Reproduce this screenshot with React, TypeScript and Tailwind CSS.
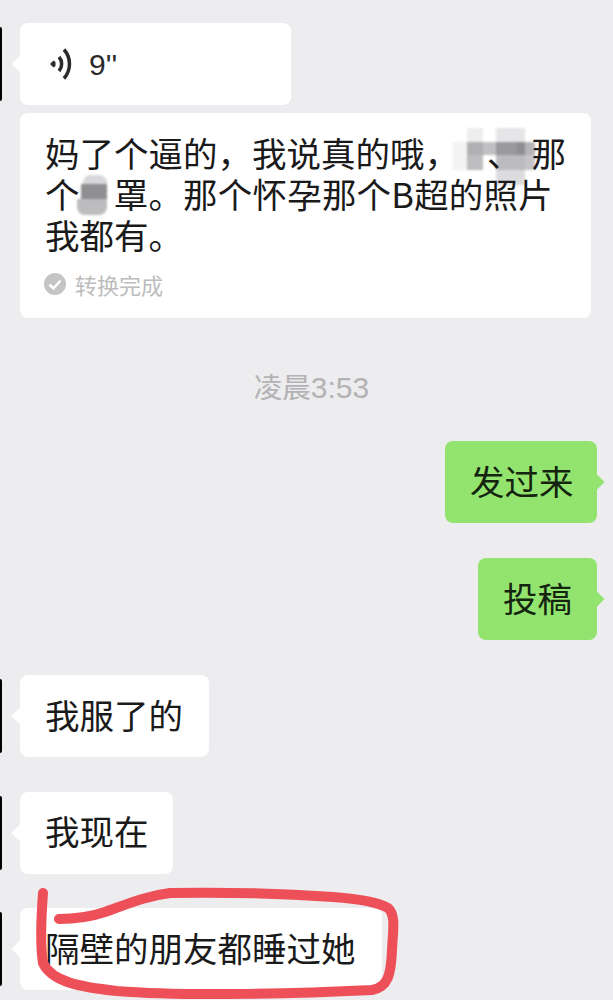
import type { ReactNode } from "react"

const mosaicCells = [
  "bg-white", "bg-[#eeeeef]", "bg-white", "bg-[#e5e5e7]", "bg-[#e5e5e7]", "bg-white",
  "bg-[#f3f3f4]", "bg-[#b0b0b2]", "bg-[#c0c0c2]", "bg-[#9a9a9c]", "bg-[#8f8f91]", "bg-[#b5b5b7]",
  "bg-[#f3f3f4]", "bg-[#bdbdbf]", "bg-white", "bg-[#bcbcbe]", "bg-[#bcbcbe]", "bg-[#c5c5c7]",
  "bg-white", "bg-white", "bg-white", "bg-[#dcdcde]", "bg-[#dcdcde]", "bg-white",
]

function Avatar() {
  return <div className="w-[2px] h-[74px] bg-black rounded-r-[2px] mr-[18px] shrink-0" />
}

function Tail({ color }: { color: string }) {
  return <div className={`w-[12px] h-[12px] rotate-45 shrink-0 ${color}`} />
}

function LeftBubble({ children, width }: { children: ReactNode; width: string }) {
  return (
    <div className="flex items-center">
      <Avatar />
      <div className={`h-[82px] ${width} bg-white rounded-[8px] flex items-center`}>
        <div className="-ml-[6px]">
          <Tail color="bg-white" />
        </div>
        <span className="ml-[19px] mb-[4px]">{children}</span>
      </div>
    </div>
  )
}

function RightBubble({ children, width }: { children: ReactNode; width: string }) {
  return (
    <div className={`h-[82px] ${width} bg-[#92e46f] rounded-[8px] flex items-center justify-between pl-[25px]`}>
      <span className="mb-[4px] text-[#14240f]">{children}</span>
      <div className="-mr-[5px]">
        <Tail color="bg-[#92e46f]" />
      </div>
    </div>
  )
}

export default function App() {
  return (
    <div className="relative w-[613px] h-[1000px] overflow-hidden bg-[#edecee] pt-[23px] text-[34.5px] leading-[41px] text-[#1a1a1a] font-['Noto_Sans_CJK_SC','Noto_Sans',sans-serif]">
      <div className="flex items-center">
        <Avatar />
        <div className="h-[82px] w-[271px] bg-white rounded-[8px] flex items-center">
          <div className="-ml-[6px]">
            <Tail color="bg-white" />
          </div>
          <svg width="24" height="34" viewBox="0 0 24 34" fill="none" className="ml-[24px] text-[#2b2b2b]">
            <path d="M0 17l3.500-3.500 2 1.500v4l-2 1.500z" fill="currentColor" />
            <path d="M9 10a10.500 10.500 0 0 1 0 14" stroke="currentColor" strokeWidth="3.500" />
            <path d="M14 2.500a22 22 0 0 1 0 29" stroke="currentColor" strokeWidth="3.500" />
          </svg>
          <span className="ml-[15px] text-[30px] font-['Liberation_Sans',sans-serif] text-[#2b2b2b]">9''</span>
        </div>
      </div>

      <div className="relative ml-[20px] mt-[8px] w-[571px] h-[205px] bg-white rounded-[8px] pl-[25px] pt-[19px]">
        {/* pixelated cover over the names */}
        <div className="absolute left-[433px] top-[15px] grid grid-cols-[14px_16px_13px_21px_8px_10px] grid-rows-[14px_13px_15px_15px] blur-[1px]">
          {mosaicCells.map((cell, i) => (
            <div key={i} className={cell} />
          ))}
        </div>
        <div className="absolute left-[57px] top-[62px] w-[30px] flex flex-col items-end blur-[1px]">
          <div className="w-[24px] h-[9px] bg-[#d8d8da] rounded-t-[8px]" />
          <div className="w-[26px] h-[15px] bg-[#8f8f91]" />
          <div className="w-[30px] h-[16px] bg-[#bdbdbf] rounded-b-[8px]" />
        </div>
        <div className="relative whitespace-nowrap">
          {"妈了个逼的\uFF0C我说真的哦\uFF0C"}
          <span className="inline-block w-[28px]" />、<span className="inline-block w-[10px]" />那
        </div>
        <div className="relative whitespace-nowrap tracking-[0.2px]">
          个<span className="inline-block w-[34px]" />罩。那个怀孕那个B超的照片
        </div>
        <div className="relative whitespace-nowrap">我都有。</div>
        <div className="flex items-center mt-[16px] text-[22px] leading-[26px] text-[#bcbcbc]">
          <svg width="22" height="22" viewBox="0 0 22 22" className="mr-[9px] -ml-[1px]">
            <circle cx="11" cy="11" r="11" fill="#c4c4c4" />
            <path d="M5.500 11.500l4 4 7-8" fill="none" stroke="#fff" strokeWidth="2.500" />
          </svg>
          转换完成
        </div>
      </div>

      <div className="mt-[52px] h-[32px] flex justify-center items-baseline text-[28.5px] leading-[32px] text-[#b3b2b4] pl-[10px]">
        凌晨<span className="font-['Liberation_Sans',sans-serif] text-[30px]">3:53</span>
      </div>

      <div className="flex flex-col items-end pr-[16px] mt-[39px] gap-[35px]">
        <RightBubble width="w-[152px]">发过来</RightBubble>
        <RightBubble width="w-[119px]">投稿</RightBubble>
      </div>

      <div className="flex flex-col mt-[35px] gap-[34.500px]">
        <LeftBubble width="w-[189px]">我服了的</LeftBubble>
        <LeftBubble width="w-[153px]">我现在</LeftBubble>
        <LeftBubble width="w-[362px]">隔壁的朋友都睡过她</LeftBubble>
      </div>

      {/* red marker circled round the last message */}
      <svg className="absolute left-0 top-0" width="613" height="1000" fill="none">
        <path
          d="M43 893C41 920 40 945 43 963C52 982 80 987 117 991C190 997 310 993 372 990C388 987 391 975 392 950C393 930 396 915 388 908C378 902 360 899 333 897C290 894 230 892 170 893C145 896 125 905 105 912C90 917 75 919 59 919"
          stroke="#ee5059"
          strokeWidth="10"
          strokeLinecap="round"
          strokeLinejoin="round"
        />
      </svg>
    </div>
  )
}
